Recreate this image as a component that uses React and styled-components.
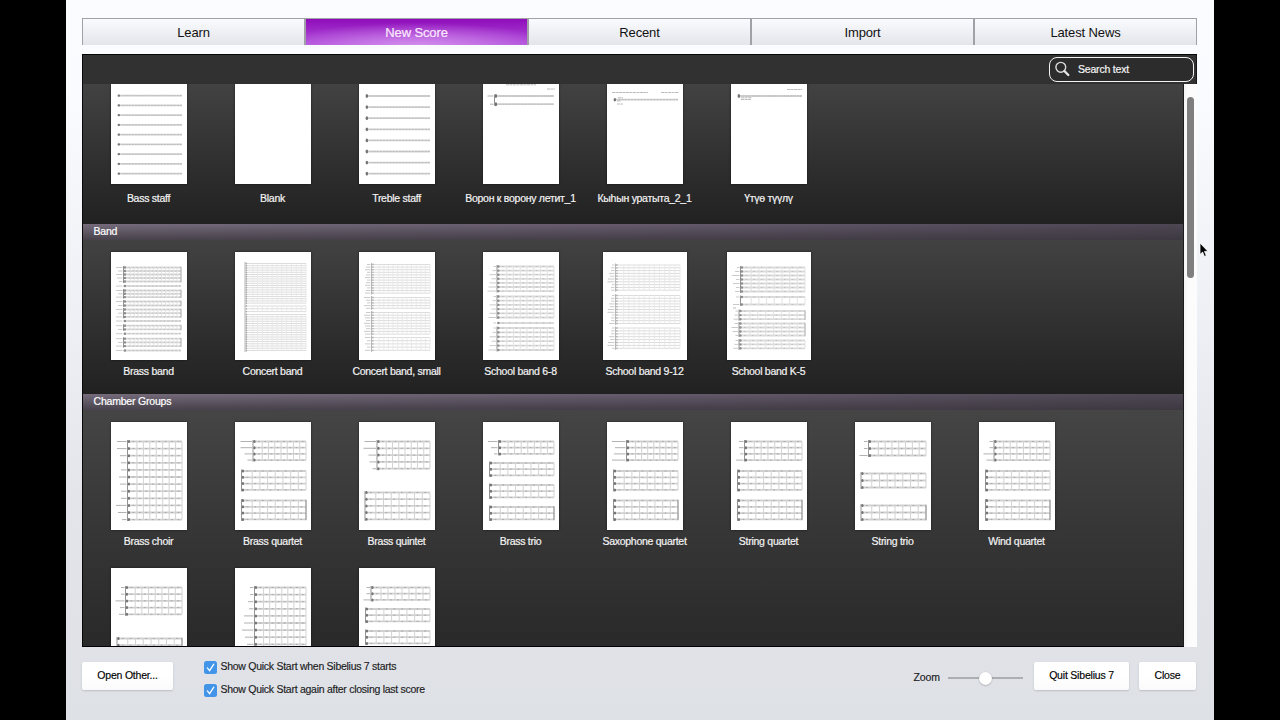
import { useState } from 'react'
import styled, { createGlobalStyle, css } from 'styled-components'

const GlobalStyle = createGlobalStyle`
  * {
    box-sizing: border-box;
  }
  body {
    margin: 0;
    background: #000;
    overflow: hidden;
    font-family: 'Liberation Sans', Arial, sans-serif;
  }
`

const Stage = styled.div`
  display: flex;
  justify-content: center;
  width: 1280px;
  height: 720px;
  background: #000;
`

const Window = styled.main`
  position: relative;
  display: flex;
  flex-direction: column;
  width: 1148px;
  height: 720px;
  padding: 18px 17px 0 16px;
  letter-spacing: -0.27px;
  background: linear-gradient(#fbfcff 0, #fafbfe 100px, #eeeff4 330px, #e4e5eb 500px, #e0e2e7 640px, #dee1e6 720px);
`

const Tabs = styled.nav`
  display: grid;
  grid-template-columns: repeat(5, 1fr);
  height: 27px;
`

const Tab = styled.button`
  border: 1px solid #a0a0a6;
  border-bottom: none;
  padding: 0;
  font: 13px 'Liberation Sans', Arial, sans-serif;
  letter-spacing: -0.12px;
  color: #111;
  background: linear-gradient(#fafbfe, #e3e5ea);

  ${(p) =>
    p.$active &&
    css`
      color: #fbeaff;
      border-color: #8a1fae #b77fcb 0 #b77fcb;
      -webkit-text-stroke: 0.2px #fbeaff;
      background: radial-gradient(ellipse 65% 95% at 50% 110%, #d593ee 0, rgba(213, 147, 238, 0) 100%),
        linear-gradient(#8f0dba, #b04ddb);
    `}
`

const Panel = styled.section`
  display: flex;
  flex-direction: column;
  height: 593px;
  margin-top: 9px;
  background: #303030;
  border-top: 1px solid #050505;
`

const SearchBar = styled.div`
  display: flex;
  justify-content: flex-end;
  height: 29px;
  padding: 2px 2px 0 0;
  background: #313131;
  border-left: 1px solid #080808;
  border-right: 1px solid #151515;
`

const SearchField = styled.label`
  display: flex;
  align-items: center;
  width: 145px;
  height: 25px;
  padding: 0 0 1px 5px;
  gap: 8px;
  border: 1.5px solid #f2f2f2;
  border-radius: 8px;
  background: #2c2c2c;
  color: #f4f4f4;
  font-size: 10.5px;
  letter-spacing: -0.2px;
  -webkit-text-stroke: 0.2px #f4f4f4;
`

const Body = styled.div`
  display: flex;
  flex: 1;
  min-height: 0;
`

const Scores = styled.div`
  flex: 1;
  overflow: hidden;
  border-left: 1px solid #080808;
  border-right: 1px solid #1c1c1e;
  border-bottom: 1px solid #000;
`

const Track = styled.div`
  width: 13px;
  padding: 13px 3px 0 3px;
  background: linear-gradient(90deg, #f4f4f5, #fcfcfd 4px);
`

const Thumb = styled.div`
  width: 7px;
  height: 181px;
  border-radius: 4px;
  background: #7f7f80;
`

const Heading = styled.h2`
  height: 16px;
  margin: 0;
  padding-left: 10.5px;
  font-size: 10.5px;
  font-weight: normal;
  line-height: 15px;
  color: #fff;
  letter-spacing: -0.2px;
  -webkit-text-stroke: 0.2px #fff;
  background: linear-gradient(rgba(75, 65, 80, 0) 0, rgba(55, 52, 58, 0.75) 100%),
    linear-gradient(90deg, #766c7c, #665b6d 50%, #4d4653);
`

const Grid = styled.div`
  display: grid;
  grid-template-columns: repeat(auto-fill, 124px);
  grid-auto-rows: 146px;
  height: ${(p) => p.$height}px;
  padding: ${(p) => p.$top}px 0 0 3.5px;
  background: ${(p) =>
    p.$tall
      ? 'linear-gradient(#454545, #363636 120px, #292929 240px)'
      : 'linear-gradient(#424242, #303030 55%, #212122)'};
`

const Card = styled.figure`
  display: flex;
  flex-direction: column;
  align-items: center;
  gap: ${(p) => p.$gap || 5}px;
  margin: 0;

  svg {
    display: block;
    flex: none;
    background: #fff;
    box-shadow: 0 0 2px rgba(0, 0, 0, 0.6);
  }
  figcaption {
    font-size: 10.5px;
    line-height: 13px;
    white-space: nowrap;
    color: #f3f3f3;
    -webkit-text-stroke: 0.2px #f3f3f3;
  }
`

const Footer = styled.footer`
  display: flex;
  align-items: flex-start;
  padding: 15px 1px 0 0;
  font-size: 10.5px;
  color: #1b1b1d;
  -webkit-text-stroke: 0.15px #1b1b1d;
`

const Button = styled.button`
  width: ${(p) => p.$width}px;
  height: 28px;
  margin-left: ${(p) => p.$left || 0}px;
  padding: 0 0 2px;
  border: none;
  border-radius: 2px;
  background: linear-gradient(#fff 50%, #fafafc);
  box-shadow: 0 1px 2px rgba(0, 0, 0, 0.16);
  font: 10.5px 'Liberation Sans', Arial, sans-serif;
  letter-spacing: -0.2px;
  -webkit-text-stroke: 0.15px #000;
  color: #000;
`

const Options = styled.div`
  display: flex;
  flex-direction: column;
  gap: 10px;
  margin: -2px 0 0 31px;
`

const Option = styled.label`
  display: flex;
  align-items: center;
  gap: 3.5px;
  height: 13px;
  line-height: 13px;

  svg {
    margin-top: 1px;
  }
`

const ZoomLabel = styled.span`
  margin: 9px 8px 0 auto;
  line-height: 12px;
  letter-spacing: -0.1px;
`

const Slider = styled.div`
  display: flex;
  align-items: center;
  justify-content: center;
  width: 75px;
  height: 2px;
  margin: 15px 11px 0 0;
  background: #adaeb2;
`

const Knob = styled.i`
  flex: none;
  width: 13px;
  height: 13px;
  margin-top: 1px;
  border-radius: 50%;
  background: #fff;
  box-shadow: 0 0.5px 1.5px rgba(0, 0, 0, 0.35);
`

const Cursor = styled.svg`
  position: absolute;
  left: 1133px;
  top: 242px;
`

// a run of n staves, starting at y and spaced by step
// names holds the lengths of the instrument names left of the staves
const sys = (x, y, step, n, extra = {}) => ({ x, y, step, n, right: 71, bars: 8, ...extra })
const usual = [9, 9, 6, 5, 5, 7, 6, 5, 5, 10, 8, 4]
const named = { names: usual }
const final = { final: true }

const quartet = (x, names) => [sys(x, 19.5, 6.2, 4, { names }), sys(6.5, 49, 6.3, 4), sys(6.5, 78.5, 6.3, 4, final)]
const trio = (x, names) => [
  sys(x, 19.5, 6.2, 3, { names }),
  sys(6.5, 41, 6.2, 3),
  sys(6.5, 63, 6.2, 3),
  sys(6.5, 85, 6.2, 3, final),
]
const fine = { names: usual, faint: true, bars: 12 }
const pale = { names: usual, pale: true }

const recent = [
  { name: 'Bass staff', systems: Array.from({ length: 9 }, (_, i) => sys(6.5, 11.7 + i * 9.75, 0, 1, { dots: true, clef: 1.1 })) },
  { name: 'Blank', systems: [] },
  { name: 'Treble staff', systems: Array.from({ length: 8 }, (_, i) => sys(6.5, 12 + i * 11.1, 0, 1, { dots: true, clef: 1.9 })) },
  {
    name: 'Ворон к ворону летит_1',
    systems: [sys(11.5, 12, 8.2, 2, { dots: true, names: [6, 3], clef: 2, joined: false })],
    text: [[23, 0.8, 30], [64, 5, 8]],
  },
  {
    name: 'Кыһын уратыта_2_1',
    systems: [sys(6.5, 15.7, 0, 1, { dots: true, clef: 1.7 })],
    text: [[5, 8.5, 36], [54, 8.5, 18], [11, 13.8, 5], [10, 17, 4], [10, 20, 6]],
  },
  {
    name: 'Үтүө түүлү',
    systems: [sys(6.5, 12, 0, 1, { dots: true, clef: 2 })],
    text: [[56, 5.5, 15], [10, 13.8, 11], [10, 15.5, 10]],
  },
]

const band = [
  {
    name: 'Brass band',
    systems: [
      [15.5, 3.5, 5], [34, 0, 1], [38.5, 3.3, 3], [49.5, 4, 2], [57.5, 3.7, 3],
      [69, 0, 1], [73.7, 3.7, 2], [81.7, 0, 1], [86.7, 3.7, 3], [98.5, 0, 1],
    ].map(([y, step, n]) => sys(12.5, y, step, n, { ...pale, names: [6, 4, 6, 5, 3], right: 70, bars: 14, final: n > 1 })),
  },
  {
    name: 'Concert band',
    systems: [
      sys(10, 11.5, 2.2, 19, { ...fine, names: null }),
      sys(10, 54, 2.8, 3, { ...fine, names: null }),
      sys(10, 62.5, 2.25, 17, { ...fine, names: null }),
    ],
  },
  {
    name: 'Concert band, small',
    systems: [
      sys(12.5, 12.5, 2.6, 12, { ...fine, names: [3, 4, 5] }),
      sys(12.5, 45.5, 2.7, 5, { ...fine, names: [6, 4, 3] }),
      sys(12.5, 60.5, 2.7, 9, { ...fine, names: [4, 6, 5] }),
      sys(12.5, 85.5, 3.2, 5, { ...fine, names: [5, 3] }),
    ],
  },
  {
    name: 'School band 6-8',
    systems: [[14.5, 4.1, 7], [44.5, 4.2, 6], [71, 0, 1], [76, 4.4, 6]].map(([y, step, n]) =>
      sys(14, y, step, n, { ...pale, names: [2, 3, 6, 4, 6, 7, 8] })
    ),
  },
  {
    name: 'School band 9-12',
    width: 84,
    systems: [[13, 2.8, 10], [43.5, 2.8, 11], [76, 2.9, 8]].map(([y, step, n]) =>
      sys(12.5, y, step, n, { ...fine, names: [2, 3, 3, 5, 4, 6, 7], right: 77 })
    ),
  },
  {
    name: 'School band K-5',
    width: 84,
    systems: [
      sys(13.5, 15.5, 4, 7, { ...pale, names: [2, 4, 7, 3, 6, 3, 4], right: 78 }),
      sys(13.5, 45, 7.5, 2, { ...pale, names: [3, 6], right: 78 }),
      sys(12, 59, 4.1, 3, { ...pale, names: [2, 3, 4], right: 78, final: true }),
      sys(12, 71.5, 4, 4, { ...pale, names: [3, 6, 5, 2], right: 78, final: true }),
      sys(12, 88.5, 3.9, 3, { ...pale, names: [2, 3, 4], right: 78 }),
    ],
    text: [[6, 56, 3]],
  },
]

const chamber = [
  { name: 'Brass choir', systems: [sys(16.5, 19.5, 7.1, 12, named)] },
  { name: 'Brass quartet', systems: quartet(18, [11, 11, 7, 4]) },
  { name: 'Brass quintet', systems: [sys(18, 19.5, 6.8, 5, { names: [11, 12, 7, 6, 3] }), sys(6, 70.5, 6.7, 5)] },
  { name: 'Brass trio', systems: trio(15.5, [9, 6, 3]) },
  { name: 'Saxophone quartet', systems: quartet(19.5, [13, 10, 11, 13]) },
  { name: 'String quartet', systems: quartet(13.5, [4, 4, 3, 7]) },
  { name: 'String trio', systems: [sys(13.5, 19.5, 7, 3, { names: [3, 3, 8] }), sys(6, 51.5, 7, 3), sys(6, 83.5, 7, 3, final)] },
  { name: 'Wind quartet', systems: quartet(15, [3, 3, 9, 6]) },
  { name: '', systems: [sys(14.5, 19.5, 6.7, 5, { names: [3, 3, 9, 4, 5] }), sys(6, 70.5, 6.7, 5, final)] },
  { name: '', systems: [sys(19.5, 19.5, 7.1, 12, { names: [3, 3, 5, 4, 9, 9, 11, 8, 6, 5, 5, 4] })] },
  { name: '', systems: trio(12, [3, 3, 6]) },
]

const Staves = ({ x, y, step, n, right, bars, names, final, dots, faint, pale, clef = 1.5, joined = true }) => {
  const bottom = y + step * (n - 1)
  const stroke = faint ? '#dcdcdc' : pale ? '#dadada' : '#d0d0d0'
  const rows = Array.from({ length: n }, (_, i) => y + step * i)
  const barWidth = (right - x - 3) / bars
  return (
    <g>
      {rows.map((row, i) => (
        <g key={row}>
          <path d={`M${x} ${row}H${right}`} stroke={stroke} strokeWidth={faint ? 1 : 1.8} />
          {!faint && (
            <path
              d={`M${x + 5} ${row}H${right}`}
              stroke="#8d8d8d"
              strokeWidth="0.9"
              strokeDasharray={dots ? '1.8 1.4' : `1.8 ${barWidth - 1.8}`}
              opacity={dots || pale ? 0.35 : 0.65}
            />
          )}
          <ellipse
            cx={x + 1.4}
            cy={row}
            rx={faint ? 0.7 : 1.2}
            ry={faint ? 0.9 : pale ? 1.2 : clef}
            fill={faint ? '#aaa' : pale ? '#8c8c8c' : '#747474'}
          />
          {names && (
            <path
              d={`M${Math.max(4.5, x - 1.5 - names[i % names.length])} ${row}H${x - 1}`}
              stroke={faint || pale ? '#c4c4c4' : '#a8a8a8'}
              strokeWidth="0.9"
            />
          )}
        </g>
      ))}
      {n > 1 && <path d={`M${x} ${y - 1.5}V${bottom + 1.5}`} stroke={faint ? '#b0b0b0' : '#888'} strokeWidth="0.9" />}
      {n > 1 && joined && (
        <path
          d={Array.from({ length: bars }, (_, i) => `M${x + 3 + barWidth * (i + 1)} ${y}V${bottom}`).join('')}
          stroke={faint ? '#e8e8e8' : pale ? '#e0e0e0' : '#cfcfcf'}
          strokeWidth="0.9"
        />
      )}
      {final && <path d={`M${right} ${y - 0.8}V${bottom + 0.8}`} stroke={pale ? '#aaa' : '#808080'} strokeWidth="0.9" />}
    </g>
  )
}

const Score = ({ name, width = 76, systems, text = [], height = 108, gap }) => (
  <Card $gap={gap}>
    <svg width={width} height={height} viewBox={`0 0 ${width} ${height}`} fill="none">
      {systems.map((s, i) => (
        <Staves key={i} {...s} />
      ))}
      {text.map(([x, y, w]) => (
        <path key={`${x}-${y}`} d={`M${x} ${y}h${w}`} stroke="#b4b4b4" strokeWidth="0.9" strokeDasharray="3 0.5" />
      ))}
    </svg>
    <figcaption>{name}</figcaption>
  </Card>
)

const Check = () => (
  <svg width="13" height="13" viewBox="0 0 13 13">
    <rect width="13" height="13" rx="2.5" fill="#4194e8" />
    <path d="M3.3 6.9l2.3 2.7 4.2-6.4" stroke="#fff" strokeWidth="1.3" fill="none" strokeLinecap="round" />
  </svg>
)

const tabs = ['Learn', 'New Score', 'Recent', 'Import', 'Latest News']

const App = () => {
  const [active, setActive] = useState('New Score')

  return (
    <Stage>
      <GlobalStyle />
      <Window>
        <Tabs>
          {tabs.map((tab) => (
            <Tab key={tab} $active={tab === active} onClick={() => setActive(tab)}>
              {tab}
            </Tab>
          ))}
        </Tabs>
        <Panel>
          <SearchBar>
            <SearchField>
              <svg width="15" height="16" viewBox="0 0 15 16" fill="none">
                <circle cx="5.8" cy="6.3" r="4.9" stroke="#ddd" strokeWidth="1.4" />
                <path d="M9.4 10l3.9 4" stroke="#e4e4e4" strokeWidth="2.4" strokeLinecap="round" />
              </svg>
              Search text
            </SearchField>
          </SearchBar>
          <Body>
            <Scores>
              <Grid $height={140} $top={0}>
                {recent.map((s) => (
                  <Score key={s.name} {...s} height={100} gap={8} />
                ))}
              </Grid>
              <Heading>Band</Heading>
              <Grid $height={154} $top={12}>
                {band.map((s) => (
                  <Score key={s.name} {...s} />
                ))}
              </Grid>
              <Heading>Chamber Groups</Heading>
              <Grid $height={300} $top={12} $tall>
                {chamber.map((s, i) => (
                  <Score key={i} {...s} />
                ))}
              </Grid>
            </Scores>
            <Track>
              <Thumb />
            </Track>
          </Body>
        </Panel>
        <Footer>
          <Button $width={91}>Open Other...</Button>
          <Options>
            <Option>
              <Check />
              Show Quick Start when Sibelius 7 starts
            </Option>
            <Option>
              <Check />
              Show Quick Start again after closing last score
            </Option>
          </Options>
          <ZoomLabel>Zoom</ZoomLabel>
          <Slider>
            <Knob />
          </Slider>
          <Button $width={95}>Quit Sibelius 7</Button>
          <Button $width={57} $left={10}>
            Close
          </Button>
        </Footer>
        <Cursor width="10" height="16" viewBox="0 0 10 16">
          <path d="M1 1v11.5l2.6-2.4 1.8 4.3 1.9-.8-1.8-4.2H9z" fill="#000" stroke="#fff" strokeWidth="0.8" />
        </Cursor>
      </Window>
    </Stage>
  )
}

export default App
